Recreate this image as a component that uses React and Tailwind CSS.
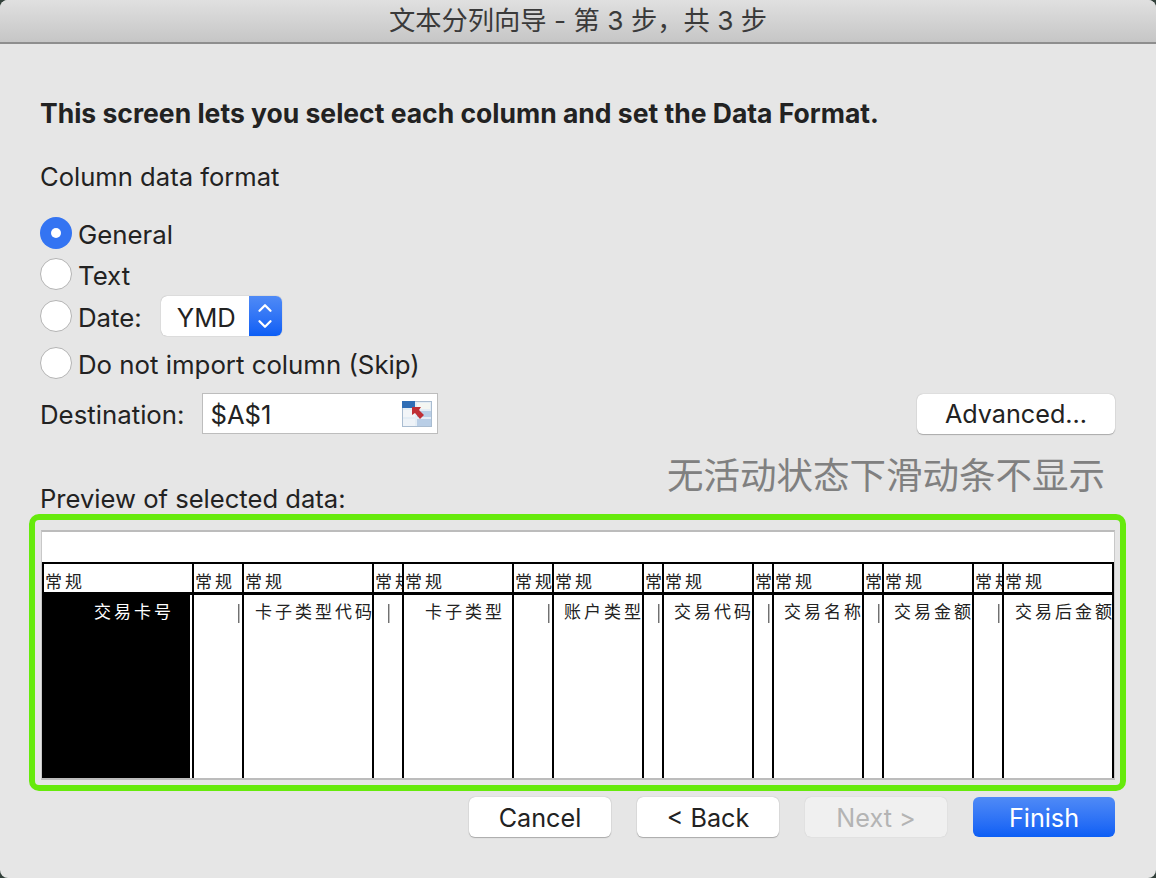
import { ChevronDown, ChevronUp } from "lucide-react";

const COLUMNS = [
  { width: 150, label: "交易卡号", cls: "pl-[52px] text-white" },
  { width: 50, label: "|", cls: "pr-[1px]", bar: true },
  { width: 130, label: "卡子类型代码", cls: "pl-[11px]" },
  { width: 30, label: "|", cls: "pr-[11px]", bar: true },
  { width: 110, label: "卡子类型", cls: "pl-[21px]" },
  { width: 40, label: "|", cls: "pr-[1px]", bar: true },
  { width: 90, label: "账户类型", cls: "pl-[10px]" },
  { width: 20, label: "|", cls: "pr-[1px]", bar: true },
  { width: 90, label: "交易代码", cls: "pl-[10px]" },
  { width: 20, label: "|", cls: "pr-[1px]", bar: true },
  { width: 90, label: "交易名称", cls: "pl-[10px]" },
  { width: 20, label: "|", cls: "pr-[1px]", bar: true },
  { width: 90, label: "交易金额", cls: "pl-[10px]" },
  { width: 30, label: "|", cls: "pr-[1px]", bar: true },
  { width: 110, label: "交易后金额", cls: "pl-[11px]" },
];

const Radio = ({ checked }) =>
  checked ? (
    <span className="w-8 h-8 shrink-0 rounded-full bg-[#3474f2] flex items-center justify-center">
      <span className="w-[10px] h-[10px] rounded-full bg-white" />
    </span>
  ) : (
    <span className="w-8 h-8 shrink-0 rounded-full bg-white border border-[#b4b4b4]" />
  );

const RadioRow = ({ checked, label, className, children }) => (
  <div className={`flex items-center ${className}`}>
    <Radio checked={checked} />
    <span className="ml-[6px] h-8 leading-[35px] text-[25.8px] whitespace-nowrap">{label}</span>
    {children}
  </div>
);

const Button = ({ children, className }) => (
  <button
    className={`w-[142px] h-10 rounded-[6px] text-[25.2px] leading-none pt-[3px] flex items-center justify-center ${className}`}
  >
    {children}
  </button>
);

const RangeIcon = () => (
  <svg width="30" height="26" viewBox="0 0 30 26" className="shrink-0">
    <rect width="30" height="26" fill="#a9bcd0" />
    <rect x="1" y="1" width="28" height="24" fill="#e4edf5" />
    <rect x="0" y="0" width="13" height="7" fill="#2f6db5" />
    <rect x="15" y="2" width="13" height="6" fill="#f4f6f2" />
    <rect x="1" y="9" width="12" height="7" fill="#f2f5f8" />
    <rect x="15" y="10" width="14" height="6" fill="#b9cee6" />
    <rect x="1" y="18" width="12" height="7" fill="#eef3f8" />
    <rect x="15" y="18" width="14" height="7" fill="#b9cee6" />
    <path d="M10 6 L19 6 L17 9 L22 14 L18 18 L13 12 L10 14 Z" fill="#bf2f35" />
  </svg>
);

const App = () => {
  return (
    <div className="w-[1156px] h-[878px] bg-[#33413b] overflow-hidden font-['Inter','Noto_Sans_CJK_SC',sans-serif] text-[#222]">
      <div className="h-full rounded-[8px] overflow-hidden bg-[#e6e6e6] flex flex-col">
        {/* Title bar */}
        <div className="h-[44px] shrink-0 flex items-center justify-center bg-gradient-to-b from-[#e0e0e0] to-[#c6c6c6] border-b-2 border-[#8e8e8e] text-[26.3px] leading-none text-[#3a3a3a]">
          文本分列向导 - 第 3 步，共 3 步
        </div>

        <div className="flex-1 pl-[29px] pr-[30px]">
          <div className="pl-[11px] pr-[11px] text-[25.6px] leading-[30px]">
            <h1 className="mt-[54px] h-[30px] text-[26.5px] font-bold whitespace-nowrap">
              This screen lets you select each column and set the Data Format.
            </h1>
            <div className="mt-[34px] h-[30px]">Column data format</div>

            <RadioRow checked label="General" className="mt-[25px]" />
            <RadioRow label="Text" className="mt-[9px]" />
            <RadioRow label="Date:" className="mt-[6px]">
              <div className="ml-[19px] w-[121px] h-10 rounded-[6px] bg-white overflow-hidden flex shadow-[0_0_1px_#888]">
                <span className="flex-1 pl-[3px] pt-[3px] flex items-center justify-center">YMD</span>
                <span className="w-[33px] bg-gradient-to-b from-[#4f8af6] to-[#0b5ef5] flex flex-col items-center justify-center text-white">
                  <ChevronUp size={22} strokeWidth={2.5} className="-mb-[6px]" />
                  <ChevronDown size={22} strokeWidth={2.5} />
                </span>
              </div>
            </RadioRow>
            <RadioRow label="Do not import column (Skip)" className="mt-[11px]" />

            <div className="mt-[14px] flex items-center justify-between">
              <div className="flex items-center">
                <span className="pt-[3px] text-[25.8px]">Destination:</span>
                <div className="ml-[17px] w-[236px] h-[41px] bg-white border border-[#bdbdbd] flex items-center justify-between pl-[8px] pr-[5px]">
                  <span className="pt-[3px]">$A$1</span>
                  <RangeIcon />
                </div>
              </div>
              <Button className="w-[198px] bg-white shadow-[0_1px_1px_#aaa,0_0_1px_#999]">Advanced...</Button>
            </div>

            <div className="mt-[15px] h-[65px] flex justify-between">
              <span className="self-end">Preview of selected data:</span>
              <span className="text-[36.5px] leading-[54px] text-[#808080] whitespace-nowrap pr-[10px]">
                无活动状态下滑动条不显示
              </span>
            </div>
          </div>

          {/* Preview with green highlight */}
          <div className="h-[277px] border-[6px] border-[#66ea0c] rounded-[10px] pt-[10px] pl-[6px] pr-[5px] pb-[5px]">
            <div className="h-full bg-white border-y-2 border-x border-t-[#bcbcbc] border-x-[#c8c8c8] border-b-[#bcbcbc] flex flex-col font-['Noto_Sans_CJK_SC',sans-serif] text-[17px] text-[#222]">
              <div className="h-[30px] shrink-0" />
              <div className="flex shrink-0 h-[33px] w-[1072px] border-l-[2px] border-t-[2px] border-b-[3px] border-black">
                {COLUMNS.map((col, i) => (
                  <div
                    key={i}
                    style={{ width: col.width }}
                    className="shrink-0 border-r-2 border-black overflow-hidden whitespace-nowrap tracking-[3px] pl-px leading-[34px]"
                  >
                    常规
                  </div>
                ))}
              </div>
              <div className="flex flex-1 w-[1072px] border-l-[2px] border-black">
                {COLUMNS.map((col, i) => (
                  <div
                    key={i}
                    style={{ width: col.width }}
                    className="shrink-0 border-r-2 border-black"
                  >
                    <div
                      className={`h-full overflow-hidden whitespace-nowrap leading-[32px] ${
                        col.bar ? "text-right will-change-transform text-[#444]" : "tracking-[3px]"
                      } ${i === 0 ? "bg-black mr-[2px] -ml-[2px]" : ""} ${col.cls}`}
                    >
                      {col.label}
                    </div>
                  </div>
                ))}
              </div>
            </div>
          </div>

          {/* Footer buttons */}
          <div className="mt-[6px] pr-[11px] flex justify-end gap-[26px]">
            <Button className="bg-white shadow-[0_1px_1px_#aaa,0_0_1px_#999]">Cancel</Button>
            <Button className="bg-white shadow-[0_1px_1px_#aaa,0_0_1px_#999]">&lt; Back</Button>
            <Button className="bg-[#f0f0f0] text-[#b4b4b4] shadow-[0_0_1px_#bbb]">Next &gt;</Button>
            <Button className="bg-gradient-to-b from-[#4f8af6] to-[#0b5ef5] text-white">Finish</Button>
          </div>
        </div>
      </div>
    </div>
  );
};

export default App;
